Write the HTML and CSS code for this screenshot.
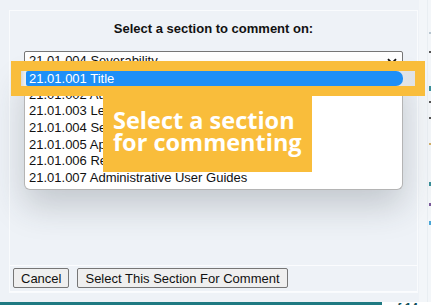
FILE: index.html
```html
<!DOCTYPE html>
<html>
<head>
<meta charset="utf-8">
<link rel="stylesheet" href="styles.css">
</head>
<body>
<div class="page">
  <div class="modal">
    <div class="modal-body">
      <h1 class="title">Select a section to comment on:</h1>
      <div class="select">
        <span class="select-value">21.01.004 Severability</span>
        <svg class="chevron" width="10" height="7" viewBox="0 0 10 7"><path d="M1 1.2 L5 5.2 L9 1.2" fill="none" stroke="#111" stroke-width="1.8"/></svg>
      </div>
    </div>
    <div class="modal-footer">
      <button class="btn">Cancel</button>
      <button class="btn">Select This Section For Comment</button>
    </div>
  </div>
  <div class="side">
    <span class="m m1"></span><span class="m m2"></span><span class="m m3"></span><span class="m m4"></span><span class="m m5"></span><span class="m m6"></span><span class="m m7"></span><span class="m m8"></span><span class="m m9"></span>
  </div>
</div>
<div class="bottom">
  <div class="teal"></div>
  <div class="white"><span>of 14</span></div>
</div>

<ul class="listbox">
  <li class="item">21.01.001 Title</li>
  <li class="item">21.01.002 Authority</li>
  <li class="item">21.01.003 Legal Effect</li>
  <li class="item">21.01.004 Severability</li>
  <li class="item">21.01.005 Applicability</li>
  <li class="item">21.01.006 References</li>
  <li class="item">21.01.007 Administrative User Guides</li>
</ul>

<div class="banner">
  <div class="strip"><div class="pill">21.01.001 Title</div></div>
</div>
<div class="callout">Select a section<br>for commenting</div>
</body>
</html>
```

FILE: styles.css
```css
html, body {
  margin: 0;
  padding: 0;
}
body {
  width: 431px;
  height: 305px;
  overflow: hidden;
  position: relative;
  background: #eef2f7;
  font-family: "Liberation Sans", Arial, sans-serif;
  font-size: 13px;
  color: #111;
}
.page {
  display: flex;
  height: 302px;
}
.modal {
  margin: 10px 0 0 9px;
  width: 408px;
  height: 281px;
  border: 1px solid #f9fbfd;
  display: flex;
  flex-direction: column;
}
.modal-body {
  flex: 1;
  border-bottom: 1px solid #fbfcfe;
  padding: 0 0 0 14px;
}
.title {
  margin: 0;
  padding-top: 10px;
  padding-right: 14px;
  font-size: 13px;
  line-height: 16px;
  font-weight: bold;
  text-align: center;
  color: #111;
}
.select {
  margin-top: 14px;
  height: 18px;
  border: 1px solid #767676;
  border-radius: 2px;
  background: #fff;
  display: flex;
  align-items: center;
  justify-content: space-between;
  padding: 0 5px 0 4px;
  box-sizing: content-box;
  width: 368px;
}
.select-value {
  line-height: 16px;
}
.modal-footer {
  height: 26px;
  border-bottom: 1px solid #fbfcfe;
  padding: 2px 3px 0;
  box-sizing: border-box;
  display: flex;
  gap: 8px;
}
.btn {
  height: 20px;
  padding: 0 7px;
  font-family: "Liberation Sans", Arial, sans-serif;
  font-size: 13px;
  color: #111;
  background: #efefef;
  border: 1px solid #767676;
  border-radius: 2px;
}
.side {
  margin-left: 1px;
  width: 12px;
  display: flex;
  flex-direction: column;
  background: linear-gradient(90deg, #f3f6f9 0 8px, #e9eef2 8px 9px, #f3f6f9 9px);
  position: relative;
}
.m {
  position: absolute;
  right: 0;
  width: 2px;
  height: 2px;
}
.m1 { top: 32px; background: #b8c6d0; }
.m2 { top: 51px; background: #555; }
.m3 { top: 86px; height: 5px; background: #3a8f99; }
.m4 { top: 101px; background: #555; }
.m5 { top: 117px; background: #555; }
.m6 { top: 143px; background: #d2b06a; }
.m7 { top: 182px; height: 4px; background: #3a8f99; }
.m8 { top: 203px; height: 3px; background: #7a5a9a; }
.m9 { top: 221px; height: 4px; background: #4aa6d6; }
.bottom {
  display: flex;
  height: 3px;
}
.teal {
  width: 382px;
  background: #1f7a82;
}
.white {
  flex: 1;
  background: #fff;
  overflow: hidden;
  position: relative;
}
.white span {
  position: absolute;
  left: 8px;
  top: 0;
  font-size: 12px;
  line-height: 12px;
  color: #0f4e5a;
  font-weight: bold;
}
.listbox {
  position: absolute;
  left: 24px;
  top: 69px;
  width: 377px;
  margin: 0;
  padding: 1px 0 2px;
  list-style: none;
  background: #fff;
  border: 1px solid #b4b4b4;
  border-top: none;
  border-radius: 0 0 6px 6px;
  box-shadow: 0 16px 34px rgba(40, 50, 60, 0.22);
}
.item {
  height: 16.67px;
  line-height: 16.67px;
  padding-left: 4px;
  white-space: nowrap;
  color: #111;
}
.banner {
  position: absolute;
  left: 11px;
  top: 61px;
  width: 394px;
  height: 15px;
  padding: 10px;
  background: #f9bd3b;
}
.strip {
  height: 15px;
  background: linear-gradient(90deg, #d7dade 0, #eceef0 4px, #e6e8eb 90%, #dfe2e6 100%);
  padding-left: 5px;
  padding-right: 12px;
}
.pill {
  height: 15px;
  line-height: 15px;
  background: #1e8ff7;
  color: #fff;
  border-radius: 2px 7px 7px 2px;
  padding-left: 3px;
  white-space: nowrap;
}
.callout {
  position: absolute;
  left: 103px;
  top: 96px;
  width: 199px;
  height: 63px;
  padding: 13px 0 0 10px;
  background: #f9bd3b;
  color: #fff;
  font-family: "Open Sans", sans-serif;
  font-weight: 700;
  font-size: 23.5px;
  line-height: 22px;
  white-space: nowrap;
}
```
